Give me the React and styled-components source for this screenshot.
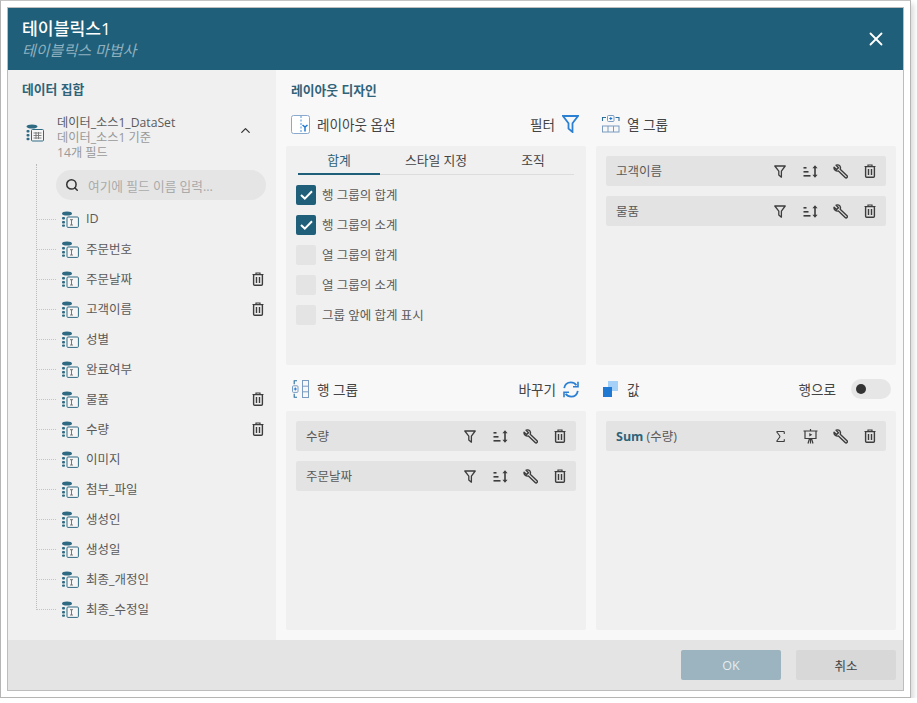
import React from "react";
import styled, { createGlobalStyle } from "styled-components";
import { Search, ChevronUp, X, Sigma } from "lucide-react";

const GlobalStyle = createGlobalStyle`
  * { box-sizing: border-box; }
  html, body { margin: 0; background: #fff; }
  body {
    font-family: "Open Sans", "Noto Sans CJK KR", sans-serif;
    font-size: 12.5px;
    color: #5a5a5a;
  }
`;

const Frame = styled.div`
  width: 911px;
  height: 698px;
  padding: 6px;
  border: 1px solid #b5b5b5;
  border-top-color: #c4c4c4;
  background: #fff;
  box-shadow: 3px 4px 5px rgba(0, 0, 0, 0.14);
`;

const Dialog = styled.div`
  height: 100%;
  display: flex;
  flex-direction: column;
  border: 1px solid #bdbdbd;
  background: #f8f8f8;
`;

const Header = styled.header`
  height: 62px;
  flex: none;
  display: flex;
  align-items: center;
  justify-content: space-between;
  padding: 0 16px 0 14px;
  background: #1f5f79;
  color: #fff;
`;

const Title = styled.div`
  font-size: 17.2px;
  line-height: 22px;
  font-weight: 500;
`;

const Subtitle = styled.div`
  font-size: 15px;
  line-height: 20px;
  font-style: italic;
  color: #8fb0bf;
`;

const Body = styled.div`
  flex: 1;
  min-height: 0;
  display: flex;
`;

const Sidebar = styled.aside`
  width: 268px;
  flex: none;
  padding: 10px 10px 0 14px;
  background: #f0f0f0;
`;

const SectionTitle = styled.h2`
  margin: 0;
  font-size: 12.8px;
  line-height: 18px;
  font-weight: 700;
  color: #2f6379;
`;

const DataSet = styled.div`
  display: flex;
  align-items: flex-start;
  margin-top: 17px;
  padding-left: 4px;
`;

const DataSetIcon = styled.div`
  width: 31px;
  flex: none;
  padding-top: 9px;
`;

const DataSetText = styled.div`
  flex: 1;
  font-size: 12.2px;
  line-height: 15px;
`;

const Muted = styled.div`
  color: #999;
`;

const Collapse = styled.div`
  width: 28px;
  padding-top: 8px;
  color: #333;
`;

const Tree = styled.div`
  position: relative;
  margin-top: 10px;
  padding-left: 34px;

  &::before {
    content: "";
    position: absolute;
    left: 14px;
    top: -6px;
    bottom: 16px;
    border-left: 1px dotted #bbb;
  }
`;

const SearchBox = styled.div`
  height: 30px;
  width: 210px;
  display: flex;
  align-items: center;
  gap: 9px;
  padding-left: 9px;
  border-radius: 15px;
  background: #e5e5e5;
  color: #aaa;
  font-size: 12.7px;
  margin-bottom: 4px;
`;

const FieldRow = styled.div`
  position: relative;
  height: 30px;
  width: 208px;
  display: flex;
  align-items: center;
  gap: 7px;
  padding-left: 5px;

  &::before {
    content: "";
    position: absolute;
    left: -20px;
    width: 20px;
    top: 15px;
    border-top: 1px dotted #c4c4c4;
  }
`;

const FieldName = styled.span`
  flex: 1;
  padding-bottom: 2px;
`;

const Main = styled.main`
  flex: 1;
  padding: 11px 8px 10px 10px;
`;

const DesignTitle = styled(SectionTitle)`
  margin-left: 5px;
`;

const Grid = styled.div`
  display: grid;
  grid-template-columns: 300px 300px;
  grid-template-rows: 219px 219px;
  column-gap: 10px;
  row-gap: 46px;
  margin-top: 47px;
`;

const Cell = styled.section`
  position: relative;
  background: #f0f0f0;
  border-radius: 2px;
  padding: ${(p) => (p.$tabs ? "0 10px" : "10px")};
`;

const CellHead = styled.div`
  position: absolute;
  left: 5px;
  right: ${(p) => (p.$toggle ? "5px" : "7px")};
  top: -34px;
  height: 24px;
  display: flex;
  align-items: center;
  gap: 7px;
  font-size: 13.6px;
  color: #444;
`;

const HeadLabel = styled.span`
  flex: 1;
`;

const HeadAction = styled.span`
  display: flex;
  align-items: center;
  gap: 7px;
`;

const Tabs = styled.div`
  display: flex;
  margin: 0 2px;
  height: 29px;
  border-bottom: 1px solid #ddd;
`;

const Tab = styled.div`
  width: ${(p) => p.$w}px;
  line-height: 28px;
  text-align: center;
  font-size: 12.8px;
  color: ${(p) => (p.$active ? "#2f6379" : "#444")};
  height: 29px;
  border-bottom: ${(p) => (p.$active ? "2px solid #1f5f79" : "none")};
`;

const Options = styled.div`
  display: flex;
  flex-direction: column;
  gap: 10px;
  margin-top: 10px;
`;

const Option = styled.label`
  display: flex;
  align-items: center;
  gap: 6px;
  height: 20px;
`;

const OptionText = styled.span`
  padding-bottom: 2px;
`;

const Box = styled.span`
  width: 20px;
  height: 20px;
  border-radius: 2px;
  display: flex;
  align-items: center;
  justify-content: center;
  background: ${(p) => (p.$on ? "#1f5f79" : "#e4e4e4")};
`;

const GroupRow = styled.div`
  height: 30px;
  display: flex;
  align-items: center;
  padding: 0 1px 0 10px;
  margin-bottom: 10px;
  border-radius: 2px;
  background: #e3e3e3;
`;

const GroupName = styled.span`
  flex: 1;
  padding-bottom: 2px;
`;

const Strong = styled.b`
  color: #2f6379;
`;

const RowIcons = styled.div`
  display: flex;
  align-items: center;
`;

const IconSlot = styled.span`
  width: 30px;
  height: 30px;
  display: flex;
  align-items: center;
  justify-content: center;
  color: #3d3d3d;
`;

const Toggle = styled.span`
  width: 40px;
  height: 20px;
  margin-left: 8px;
  padding: 5px;
  border-radius: 10px;
  background: #e6e6e6;
  display: block;

  &::after {
    content: "";
    display: block;
    width: 10px;
    height: 10px;
    border-radius: 50%;
    background: #333;
  }
`;

const Footer = styled.footer`
  height: 50px;
  flex: none;
  display: flex;
  align-items: center;
  justify-content: flex-end;
  gap: 15px;
  padding: 0 7px 0 0;
  background: #e4e4e4;
`;

const Button = styled.button`
  width: 100px;
  height: 30px;
  border: 0;
  border-radius: 2px;
  font: inherit;
  color: ${(p) => (p.$primary ? "#e4ecef" : "#444")};
  background: ${(p) => (p.$primary ? "#9bb4bf" : "#d8d8d8")};
`;

const FieldIcon = () => (
  <svg width="18" height="17" viewBox="0 0 18 17">
    <ellipse cx="6" cy="2.5" rx="5" ry="2" fill="#2f6a83" />
    <rect x="1" y="6" width="3" height="2.4" rx="1" fill="#2f6a83" />
    <rect x="1" y="10" width="3" height="2.4" rx="1" fill="#2f6a83" />
    <rect x="1" y="13.6" width="3" height="2.2" rx="1" fill="#2f6a83" />
    <rect x="6" y="6" width="11.4" height="10.4" rx="1" fill="#f6f6f6" stroke="#2f6a83" />
    <path d="M9 8.7h3M10.5 8.7v5.3M9 14h3" stroke="#777" fill="none" />
  </svg>
);

const TableIcon = () => (
  <svg width="18" height="18" viewBox="0 0 18 18">
    <ellipse cx="6" cy="2.5" rx="5.5" ry="2" fill="#2f6a83" />
    <rect x="0.5" y="6" width="3" height="2.6" rx="1" fill="#2f6a83" />
    <rect x="0.5" y="10" width="3" height="2.6" rx="1" fill="#2f6a83" />
    <rect x="0.5" y="13.8" width="3" height="2.4" rx="1" fill="#2f6a83" />
    <rect x="5.5" y="5.5" width="12" height="11.5" rx="1" fill="#f6f6f6" stroke="#2f6a83" />
    <path d="M7.5 9h8M7.5 11.5h8M7.5 14h8M10 8v7M12.5 8v7" stroke="#777" strokeWidth="0.9" fill="none" />
  </svg>
);

const TrashIcon = () => (
  <svg width="12" height="14" viewBox="0 0 12 14" fill="none" stroke="#3d3d3d">
    <path d="M0.5 2.5h11M4 2.3V1h4v1.3" strokeWidth="1.2" />
    <rect x="1.6" y="2.6" width="8.8" height="10.6" rx="1" strokeWidth="1.4" />
    <path d="M4.5 5v6M7.5 5v6" strokeWidth="1.4" />
  </svg>
);

const FunnelIcon = () => (
  <svg width="12" height="13" viewBox="0 0 12 13" fill="none" stroke="#3d3d3d" strokeWidth="1.3">
    <path d="M0.8 1h10.4L7.4 6.2v6L4.8 10V6.2z" strokeLinejoin="round" />
  </svg>
);

const SortIcon = () => (
  <svg width="15" height="13" viewBox="0 0 15 13" fill="#3d3d3d">
    <rect x="0.5" y="2" width="3" height="1.6" />
    <rect x="0.5" y="6" width="5" height="1.6" />
    <rect x="0.5" y="10" width="7" height="1.6" />
    <path d="M12 0.2l2.6 3h-1.8v6.6h1.8L12 12.8 9.4 9.8h1.8V3.2H9.4z" />
  </svg>
);

const WrenchIcon = () => (
  <svg width="15" height="15" viewBox="0 0 15 15" fill="none" stroke="#3d3d3d" strokeWidth="1.4" strokeLinejoin="round">
    <path d="M1.1 3.2L3.6 5.6 5.5 3.7 3.1 1.2C4.9.3 7 1.2 7.4 3.1 7.6 4 7.4 4.7 7.2 5.2L14 11.8c.5.5.5 1.2 0 1.8-.5.5-1.3.5-1.8 0L5.4 7C3.1 7.6.5 5.8 1.1 3.2z" />
  </svg>
);

const EaselIcon = () => (
  <svg width="15" height="15" viewBox="0 0 15 15" fill="none" stroke="#3d3d3d" strokeWidth="1.2">
    <path d="M0.5 2h14M2 2v7.5h11V2M7.5 0v2M7.5 9.5v5M5 14.5l1.5-5M10 14.5l-1.5-5" />
    <path d="M6.3 4l3 1.8-3 1.8z" fill="#3d3d3d" stroke="none" />
  </svg>
);

const LayoutIcon = () => (
  <svg width="19" height="19" viewBox="0 0 19 19" fill="none">
    <rect x="0.5" y="0.5" width="18" height="18" rx="2" fill="#fff" stroke="#8aa9cc" />
    <path d="M10 1v17" stroke="#4a90d9" strokeDasharray="2 1.5" />
    <path d="M11.5 10l2.5 2 2.5-2M14 12v4.5" stroke="#1f78d1" strokeWidth="1.5" />
  </svg>
);

const BigFunnel = () => (
  <svg width="17" height="18" viewBox="0 0 17 18" fill="none" stroke="#2c80d3" strokeWidth="1.8">
    <path d="M1 1h15l-5.5 7.2V17l-4-3.4V8.2z" strokeLinejoin="miter" />
  </svg>
);

const ColGroupIcon = () => (
  <svg width="19" height="18" viewBox="-1 0 19 18" fill="none">
    <path d="M0.5 6V2.5h3.5M13.5 2.5H17v3.5" stroke="#2a6f9e" strokeWidth="1.1" />
    <rect x="5.5" y="0.5" width="6.5" height="6" rx="1" stroke="#7a9cc0" />
    <path d="M7.3 3.5h3M8.8 2v3" stroke="#1f78d1" />
    <rect x="0.5" y="11" width="16.5" height="6" stroke="#7a9cc0" />
    <path d="M6 11v6M11.5 11v6" stroke="#7a9cc0" />
  </svg>
);

const RowGroupIcon = () => (
  <svg width="19" height="18" viewBox="-1 0 19 18" fill="none">
    <path d="M5 0.8H2.2v3.5M5 17.2H2.2v-3.5" stroke="#2a6f9e" strokeWidth="1.1" />
    <rect x="0.5" y="5.8" width="5.5" height="6.6" rx="1" stroke="#7a9cc0" />
    <path d="M1.8 9h3M3.3 7.5v3" stroke="#1f78d1" />
    <rect x="10.5" y="0.5" width="6" height="17" stroke="#7a9cc0" />
    <path d="M10.5 6.2h6M10.5 11.8h6" stroke="#7a9cc0" />
  </svg>
);

const SwapIcon = () => (
  <svg width="16" height="17" viewBox="0 0 16 17" fill="none" stroke="#2c80d3" strokeWidth="1.8">
    <path d="M1.2 7.2C1.8 3.8 4.4 1.4 7.8 1.4c2.4 0 4.3 1 5.6 2.8" />
    <path d="M14.8 9.8c-.6 3.4-3.2 5.8-6.6 5.8-2.4 0-4.3-1-5.6-2.8" />
    <path d="M15 .8v5h-5M1 16.2v-5h5" strokeWidth="1.6" />
  </svg>
);

const ValueIcon = () => (
  <svg width="19" height="16" viewBox="-2 0 19 16">
    <rect x="5" y="0" width="10" height="10" fill="#a5d0f7" />
    <rect x="0" y="6" width="9" height="10" fill="#1f78d1" />
  </svg>
);

const CheckMark = () => (
  <svg width="13" height="10" viewBox="0 0 13 10" fill="none" stroke="#fff" strokeWidth="2">
    <path d="M1 5l3.8 3.6L12 1.2" />
  </svg>
);

const fields = [
  ["ID"],
  ["주문번호"],
  ["주문날짜", true],
  ["고객이름", true],
  ["성별"],
  ["완료여부"],
  ["물품", true],
  ["수량", true],
  ["이미지"],
  ["첨부_파일"],
  ["생성인"],
  ["생성일"],
  ["최종_개정인"],
  ["최종_수정일"],
];

const options = [
  ["행 그룹의 합계", true],
  ["행 그룹의 소계", true],
  ["열 그룹의 합계", false],
  ["열 그룹의 소계", false],
  ["그룹 앞에 합계 표시", false],
];

const Group = ({ children, first = <FunnelIcon />, second = <SortIcon /> }) => (
  <GroupRow>
    <GroupName>{children}</GroupName>
    <RowIcons>
      <IconSlot>{first}</IconSlot>
      <IconSlot>{second}</IconSlot>
      <IconSlot><WrenchIcon /></IconSlot>
      <IconSlot><TrashIcon /></IconSlot>
    </RowIcons>
  </GroupRow>
);

export default function App() {
  return (
    <>
      <GlobalStyle />
      <Frame>
        <Dialog>
          <Header>
            <div>
              <Title>테이블릭스1</Title>
              <Subtitle>테이블릭스 마법사</Subtitle>
            </div>
            <X size={22} strokeWidth={2} color="#fff" />
          </Header>
          <Body>
            <Sidebar>
              <SectionTitle>데이터 집합</SectionTitle>
              <DataSet>
                <DataSetIcon><TableIcon /></DataSetIcon>
                <DataSetText>
                  <div>데이터_소스1_DataSet</div>
                  <Muted>데이터_소스1 기준</Muted>
                  <Muted>14개 필드</Muted>
                </DataSetText>
                <Collapse><ChevronUp size={15} strokeWidth={2} /></Collapse>
              </DataSet>
              <Tree>
                <SearchBox>
                  <Search size={14} strokeWidth={2.6} color="#333" />
                  여기에 필드 이름 입력...
                </SearchBox>
                {fields.map(([name, used]) => (
                  <FieldRow key={name}>
                    <FieldIcon />
                    <FieldName>{name}</FieldName>
                    {used && <TrashIcon />}
                  </FieldRow>
                ))}
              </Tree>
            </Sidebar>
            <Main>
              <DesignTitle>레이아웃 디자인</DesignTitle>
              <Grid>
                <Cell $tabs>
                  <CellHead>
                    <LayoutIcon />
                    <HeadLabel>레이아웃 옵션</HeadLabel>
                    <HeadAction>필터 <BigFunnel /></HeadAction>
                  </CellHead>
                  <Tabs>
                    <Tab $w={82} $active>합계</Tab>
                    <Tab $w={112}>스타일 지정</Tab>
                    <Tab $w={82}>조직</Tab>
                  </Tabs>
                  <Options>
                    {options.map(([label, on]) => (
                      <Option key={label}>
                        <Box $on={on}>{on && <CheckMark />}</Box>
                        <OptionText>{label}</OptionText>
                      </Option>
                    ))}
                  </Options>
                </Cell>
                <Cell>
                  <CellHead>
                    <ColGroupIcon />
                    <HeadLabel>열 그룹</HeadLabel>
                  </CellHead>
                  <Group>고객이름</Group>
                  <Group>물품</Group>
                </Cell>
                <Cell>
                  <CellHead>
                    <RowGroupIcon />
                    <HeadLabel>행 그룹</HeadLabel>
                    <HeadAction>바꾸기 <SwapIcon /></HeadAction>
                  </CellHead>
                  <Group>수량</Group>
                  <Group>주문날짜</Group>
                </Cell>
                <Cell>
                  <CellHead $toggle>
                    <ValueIcon />
                    <HeadLabel>값</HeadLabel>
                    <HeadAction>행으로 <Toggle /></HeadAction>
                  </CellHead>
                  <Group first={<Sigma size={15} strokeWidth={1.8} />} second={<EaselIcon />}>
                    <Strong>Sum</Strong> (수량)
                  </Group>
                </Cell>
              </Grid>
            </Main>
          </Body>
          <Footer>
            <Button $primary>OK</Button>
            <Button>취소</Button>
          </Footer>
        </Dialog>
      </Frame>
    </>
  );
}
